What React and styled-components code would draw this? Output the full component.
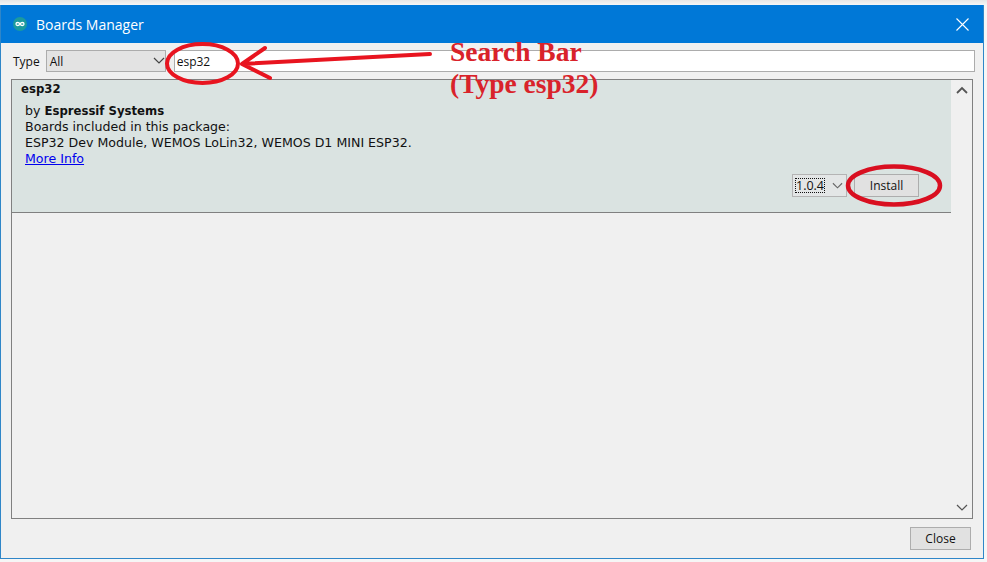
import React from 'react';
import styled, { createGlobalStyle } from 'styled-components';

const GlobalStyle = createGlobalStyle`
  html, body {
    margin: 0;
    padding: 0;
    background: #f4f4f4;
  }
`;

const Page = styled.div`
  position: relative;
  width: 987px;
  height: 562px;
  overflow: hidden;
  padding: 5px 3px 3px 0;
  box-sizing: border-box;
  background: linear-gradient(#e6e6e6, #f6f6f6 5px);
`;

const Window = styled.div`
  height: 100%;
  display: flex;
  flex-direction: column;
  box-sizing: border-box;
  border: 1px solid #2f86c8;
  border-top: none;
  background: #f0f0f0;
  font-family: "DejaVu Sans", sans-serif;
`;

const TitleBar = styled.div`
  flex: 0 0 38px;
  display: flex;
  align-items: center;
  background: #0078d7;
  color: #fff;
  padding: 0 14px 0 11px;
  font-family: "Open Sans", sans-serif;
  font-size: 14px;
`;

const TitleText = styled.span`
  margin-left: 8px;
  flex: 1;
`;

const Toolbar = styled.div`
  flex: 0 0 36px;
  display: flex;
  align-items: center;
  padding: 0 8px 0 12px;
  box-sizing: border-box;
`;

const TypeLabel = styled.span`
  font-family: "Open Sans", sans-serif;
  font-size: 12px;
  color: #111;
  margin-right: 6px;
`;

const TypeSelect = styled.div`
  width: 120px;
  height: 22px;
  box-sizing: border-box;
  display: flex;
  align-items: center;
  justify-content: space-between;
  padding: 0 0 0 3px;
  border: 1px solid #acacac;
  background: #e3e3e3;
  font-family: "Open Sans", sans-serif;
  font-size: 12px;
  color: #111;
`;

const SearchInput = styled.div`
  flex: 1;
  height: 22px;
  margin-left: 8px;
  box-sizing: border-box;
  display: flex;
  align-items: center;
  padding: 0 2px;
  border: 1px solid #acacac;
  background: #fff;
  font-family: "Open Sans", sans-serif;
  font-size: 12px;
  color: #111;
`;

const ListPanel = styled.div`
  flex: 1;
  display: flex;
  margin: 0 10px;
  border: 1px solid #808080;
  min-height: 0;
`;

const ListBody = styled.div`
  flex: 1;
  display: flex;
  flex-direction: column;
`;

const BoardItem = styled.div`
  height: 133px;
  box-sizing: border-box;
  position: relative;
  background: #dae3e1;
  border-bottom: 1px solid #808080;
  padding: 1px 0 0 9px;
  font-size: 12.6px;
  line-height: 16px;
  color: #111;
`;

const BoardName = styled.div`
  font-weight: bold;
  font-size: 11.7px;
  margin-bottom: 6px;
`;

const BoardDetails = styled.div`
  margin-left: 4px;
`;

const Vendor = styled.b`
  font-size: 11.7px;
`;

const MoreInfo = styled.a`
  color: #0000ee;
  text-decoration: underline;
`;

const ItemActions = styled.div`
  position: absolute;
  right: 32px;
  top: 94px;
  display: flex;
  align-items: center;
  gap: 7px;
`;

const VersionSelect = styled.div`
  width: 55px;
  height: 23px;
  box-sizing: border-box;
  display: flex;
  align-items: center;
  justify-content: space-between;
  padding: 0 3px 0 2px;
  border: 1px solid #b4b4b4;
  background: #e3e6e6;
`;

const VersionValue = styled.span`
  border: 1px dotted #111;
  line-height: 13px;
  font-family: "Open Sans", sans-serif;
  font-size: 12.5px;
`;

const PushButton = styled.div`
  box-sizing: border-box;
  height: 23px;
  width: ${props => props.width}px;
  display: flex;
  align-items: center;
  justify-content: center;
  border: 1px solid #adadad;
  background: #e1e1e1;
  font-family: "Open Sans", sans-serif;
  font-size: 12px;
  color: #111;
`;

const ScrollTrack = styled.div`
  flex: 0 0 21px;
  display: flex;
  flex-direction: column;
  justify-content: space-between;
  align-items: center;
  padding: 6px 0;
  background: #f0f0f0;
  box-sizing: border-box;
`;

const Footer = styled.div`
  flex: 0 0 39px;
  display: flex;
  justify-content: flex-end;
  align-items: flex-start;
  padding: 8px 12px 0 0;
  box-sizing: border-box;
`;

const Annotations = styled.svg`
  position: absolute;
  left: 0;
  top: 0;
  pointer-events: none;
`;

const Callout = styled.div`
  position: absolute;
  left: 450px;
  top: 36px;
  font-family: "Liberation Serif", serif;
  font-weight: bold;
  font-size: 27.5px;
  line-height: 32px;
  color: #d9222a;
`;

const Chevron = ({ up, color = '#555', w = 12 }) => (
  <svg width={w} height="8" viewBox="0 0 12 8">
    <path d={up ? 'M1 7 L6 2 L11 7' : 'M1 1 L6 6 L11 1'} fill="none" stroke={color} strokeWidth={up ? 1.8 : 1.2} />
  </svg>
);

const ArduinoIcon = () => (
  <svg width="16" height="16" viewBox="0 0 16 16">
    <circle cx="8" cy="8" r="7" fill="#1b9a9e" />
    <path d="M8 8 C7 6 4 6 4 8 C4 10 7 10 8 8 C9 6 12 6 12 8 C12 10 9 10 8 8 Z" fill="none" stroke="#fff" strokeWidth="1.3" />
  </svg>
);

const App = () => (
  <>
    <GlobalStyle />
    <Page>
      <Window>
        <TitleBar>
          <ArduinoIcon />
          <TitleText>Boards Manager</TitleText>
          <svg width="13" height="13" viewBox="0 0 13 13">
            <path d="M0.5 0.5 L12.5 12.5 M12.5 0.5 L0.5 12.5" stroke="#fff" strokeWidth="1.1" />
          </svg>
        </TitleBar>
        <Toolbar>
          <TypeLabel>Type</TypeLabel>
          <TypeSelect>
            All
            <Chevron color="#444" />
          </TypeSelect>
          <SearchInput>esp32</SearchInput>
        </Toolbar>
        <ListPanel>
          <ListBody>
            <BoardItem>
              <BoardName>esp32</BoardName>
              <BoardDetails>
                by <Vendor>Espressif Systems</Vendor>
                <br />
                Boards included in this package:
                <br />
                ESP32 Dev Module, WEMOS LoLin32, WEMOS D1 MINI ESP32.
                <br />
                <MoreInfo>More Info</MoreInfo>
              </BoardDetails>
              <ItemActions>
                <VersionSelect>
                  <VersionValue>1.0.4</VersionValue>
                  <Chevron color="#666" w={11} />
                </VersionSelect>
                <PushButton width={65}>Install</PushButton>
              </ItemActions>
            </BoardItem>
          </ListBody>
          <ScrollTrack>
            <Chevron up />
            <Chevron />
          </ScrollTrack>
        </ListPanel>
        <Footer>
          <PushButton width={61}>Close</PushButton>
        </Footer>
      </Window>
      <Annotations width="987" height="562" viewBox="0 0 987 562">
        <ellipse cx="202.5" cy="63.5" rx="35.5" ry="19.5" fill="none" stroke="#e8141f" strokeWidth="4" />
        <ellipse cx="894" cy="185.5" rx="46" ry="19" fill="none" stroke="#d90f20" strokeWidth="4.5" />
        <path d="M430 54 L242 64 M265 48 L242 64 L270 78" fill="none" stroke="#e8141f" strokeWidth="4" strokeLinecap="round" strokeLinejoin="round" />
      </Annotations>
      <Callout>
        Search Bar
        <br />
        (Type esp32)
      </Callout>
    </Page>
  </>
);

export default App;
